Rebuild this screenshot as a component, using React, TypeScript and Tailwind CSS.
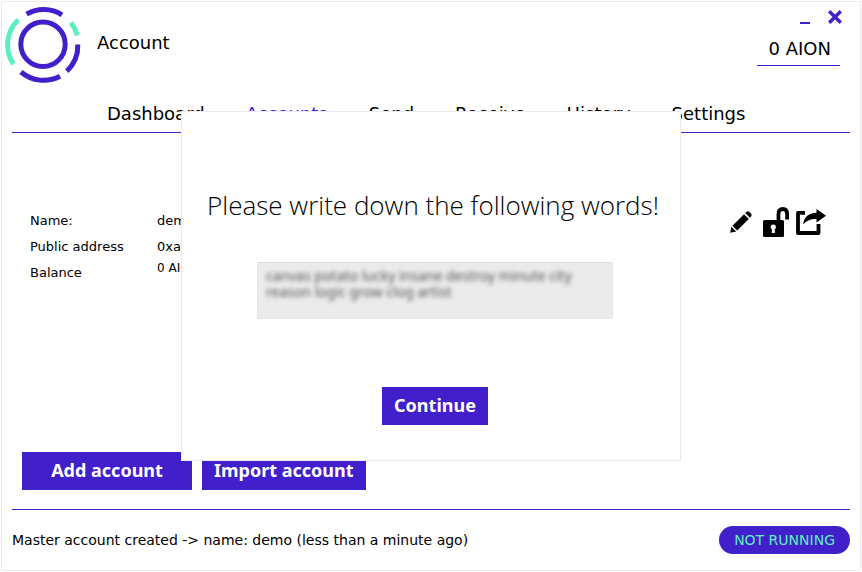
import React from "react";

const tabs = ["Dashboard", "Accounts", "Send", "Receive", "History", "Settings"];

function Logo() {
  return (
    <svg width="80" height="80" viewBox="0 0 80 80" fill="none" strokeWidth="5" aria-hidden="true">
      <circle cx="40" cy="40.3" r="22.2" stroke="#411fcb" />
      <path d="M23.6 10.2A34.5 34.5 0 0 1 59 10.8" stroke="#411fcb" />
      <path d="M68 18.5A34.5 34.5 0 0 1 74.2 31.5" stroke="#5cf0bd" />
      <path d="M74.8 40.5A35 35 0 0 1 63.8 67.2" stroke="#411fcb" />
      <path d="M57 72.3A35 35 0 0 1 18 68" stroke="#411fcb" />
      <path d="M10.5 60.2A34.5 34.5 0 0 1 15.3 15.8" stroke="#5cf0bd" />
    </svg>
  );
}

function PencilIcon() {
  return (
    <svg width="22" height="22" viewBox="0 0 22 22" fill="black" aria-hidden="true">
      <path d="M0.2 21.8L1.4 15.8L6.2 20.6Z" />
      <path d="M2.4 14.8L14 3.2L18.8 8L7.2 19.6Z" />
      <path d="M15.2 2L16.6 0.8Q18 -0.2 19.4 1L21 2.6Q22.2 4 21 5.4L20 6.8Z" />
    </svg>
  );
}

function UnlockIcon() {
  return (
    <svg width="26" height="30" viewBox="0 0 26 30" aria-hidden="true">
      <path d="M15.5 14V7Q15.5 2 19.8 2Q24.1 2 24.1 7V12.5" fill="none" stroke="black" strokeWidth="3.8" />
      <rect x="0" y="13" width="21" height="17" rx="1.5" fill="black" />
      <circle cx="10.3" cy="20" r="2.6" fill="white" />
      <path d="M9.3 20H11.4L12 26H8.7Z" fill="white" />
    </svg>
  );
}

function ShareIcon() {
  return (
    <svg width="30" height="26" viewBox="0 0 30 26" aria-hidden="true">
      <path d="M9 3.8H2V24H22.5V15" fill="none" stroke="black" strokeWidth="3.8" strokeLinejoin="round" />
      <path d="M20.5 0L30 6.7L20.5 13.4V10Q12 9.5 7.3 15.5Q8 4.5 20.5 3.8Z" fill="black" />
    </svg>
  );
}

const solid =
  "h-[38px] bg-[#411fcb] pb-[2px] text-center font-['Noto_Sans',sans-serif] text-lg font-bold text-white";

export default function App() {
  return (
    <div className="p-px font-['DejaVu_Sans',sans-serif] text-black">
      <main className="flex min-h-[570px] flex-col border border-[#ebebeb] bg-white">
        <header className="flex h-[92px] justify-between pt-[2px] pr-[18px] pl-px">
          <div className="flex h-20 items-center gap-[14px]">
            <Logo />
            <h1 className="pb-[2px] text-lg">Account</h1>
          </div>
          <div className="flex flex-col items-end">
            <div className="flex h-[26px] items-center gap-[18px]">
              <button aria-label="Minimize" className="flex h-5 w-[10px] items-end pb-[3px]">
                <span className="h-[2px] w-full bg-[#411fcb]" />
              </button>
              <button aria-label="Close" className="flex h-5 w-[14px] items-center">
                <svg width="14" height="14" viewBox="0 0 14 14" stroke="#411fcb" strokeWidth="3.4">
                  <path d="M1.2 1.2L12.8 12.8M12.8 1.2L1.2 12.8" />
                </svg>
              </button>
            </div>
            <div className="mt-[5px] mr-[2px] border-b border-[#411fcb] pr-[9px] pb-[2px] pl-3 text-lg">0 AION</div>
          </div>
        </header>
        <nav className="mx-[10px] flex h-[39px] items-center gap-[41px] border-b border-[#411fcb] pt-[2px] pl-[95px] text-lg">
          {tabs.map((t) => (
            <button key={t} className={t === "Accounts" ? "text-[#411fcb]" : ""}>
              {t}
            </button>
          ))}
        </nav>
        <section className="mt-[74px] flex justify-between pr-[34px] pl-7 text-[13px] leading-4">
          <dl className="grid auto-rows-[26px] grid-cols-[127px_auto] items-center pt-px">
            <dt>Name:</dt>
            <dd>demo</dd>
            <dt>Public address</dt>
            <dd>0xa0</dd>
            <dt>Balance</dt>
            <dd className="self-start text-xs leading-4">0 AION</dd>
          </dl>
          <div className="flex h-[30px] items-center gap-[7px]">
            <button aria-label="Edit account" className="mr-1">
              <PencilIcon />
            </button>
            <button aria-label="Unlock account">
              <UnlockIcon />
            </button>
            <button aria-label="Export account">
              <ShareIcon />
            </button>
          </div>
        </section>
        <div className="mt-auto flex gap-[10px] px-5 pb-[19px]">
          <button className={solid + " w-[170px]"}>Add account</button>
          <button className={solid + " px-3"}>Import account</button>
        </div>
        <footer className="mx-[10px] flex h-[61px] items-center justify-between border-t border-[#411fcb] text-sm">
          <p>Master account created -&gt; name: demo (less than a minute ago)</p>
          <span className="flex h-7 items-center rounded-full bg-[#411fcb] px-[15px] text-[#5cf0bd]">NOT RUNNING</span>
        </footer>
      </main>

      <div className="fixed inset-0 flex items-center justify-center">
        <div
          role="dialog"
          aria-labelledby="backup-title"
          className="flex h-[350px] w-[500px] flex-col items-center border border-[#ebebeb] bg-white pt-[73px] pl-2"
        >
          <h2
            id="backup-title"
            className="pr-1 font-['Open_Sans',sans-serif] text-[26px] leading-10 font-light whitespace-nowrap"
          >
            Please write down the following words!
          </h2>
          <div className="mt-[37px] h-[57px] w-[356px] overflow-hidden rounded-xs border border-[#e6e6e6] border-t-[#dadada] bg-[#ebebeb]">
            <textarea
              readOnly
              aria-label="Recovery words"
              className="block h-full w-full resize-none overflow-hidden px-2 py-[5px] font-['Noto_Sans',sans-serif] text-sm leading-4 text-[#555555] blur-[2px]"
              defaultValue={"canvas potato lucky insane destroy minute city\nreason logic grow clog artist"}
            />
          </div>
          <button className={solid + " mt-[68px] px-3"}>Continue</button>
        </div>
      </div>
    </div>
  );
}
